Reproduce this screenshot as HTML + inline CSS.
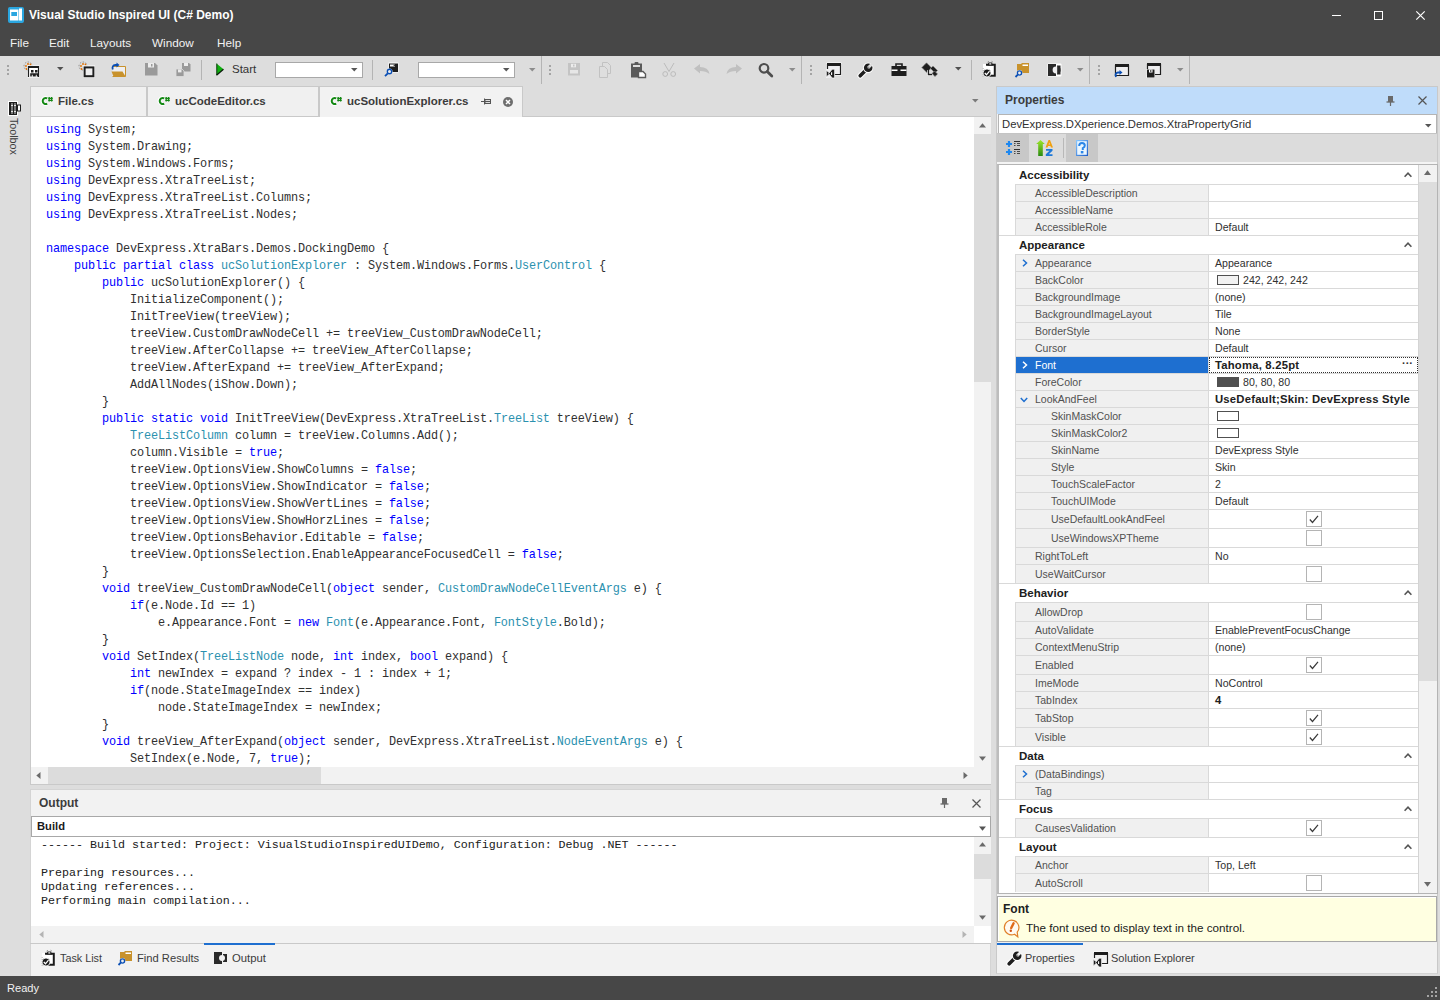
<!DOCTYPE html><html><head><meta charset="utf-8"><style>
html,body{margin:0;padding:0;}
body{width:1440px;height:1000px;position:relative;overflow:hidden;background:#dddddd;font-family:"Liberation Sans",sans-serif;font-size:11px;color:#505050;}
div{box-sizing:border-box;}
.t{position:absolute;white-space:pre;line-height:14px;}
.code{position:absolute;left:45px;top:120px;font-family:"Liberation Mono",monospace;font-size:11.85px;letter-spacing:-0.11px;line-height:17px;color:#303030;white-space:pre;}
.k{color:#0000ff;}
.ty{color:#2b91af;}
svg{position:absolute;overflow:visible;}
</style></head><body>
<div style="position:absolute;left:0px;top:0px;width:1440px;height:56px;background:#474747;"></div>
<svg style="left:8px;top:7px" width="16" height="16"><rect x="0" y="0" width="16" height="16" rx="2" fill="#2aa6e0"/><rect x="2" y="2.5" width="8.5" height="11" fill="#fff"/><rect x="3.3" y="5" width="5.7" height="4" fill="#2aa6e0"/><rect x="11" y="1.5" width="3" height="12" fill="#fff"/></svg>
<div class="t" style="left:29px;top:8px;color:#fff;font-weight:bold;font-size:12px;line-height:15px;">Visual Studio Inspired UI (C# Demo)</div>
<div style="position:absolute;left:1332px;top:15px;width:9px;height:1px;background:#fff;"></div>
<div style="position:absolute;left:1374px;top:11px;width:9px;height:9px;border:1px solid #fff;"></div>
<svg style="left:1416px;top:11px" width="9" height="9"><path d="M0.3 0.3L8.7 8.7M8.7 0.3L0.3 8.7" stroke="#fff" stroke-width="1.2"/></svg>
<div class="t" style="left:10px;top:35px;color:#f2f2f2;font-size:11.75px;line-height:15px;">File</div>
<div class="t" style="left:49px;top:35px;color:#f2f2f2;font-size:11.75px;line-height:15px;">Edit</div>
<div class="t" style="left:90px;top:35px;color:#f2f2f2;font-size:11.75px;line-height:15px;">Layouts</div>
<div class="t" style="left:152px;top:35px;color:#f2f2f2;font-size:11.75px;line-height:15px;">Window</div>
<div class="t" style="left:217px;top:35px;color:#f2f2f2;font-size:11.75px;line-height:15px;">Help</div>
<div style="position:absolute;left:0px;top:56px;width:1440px;height:30px;background:#dddddd;"></div>
<div style="position:absolute;left:7px;top:65px;width:2px;height:2px;background:#a4a4a4;"></div>
<div style="position:absolute;left:7px;top:69px;width:2px;height:2px;background:#a4a4a4;"></div>
<div style="position:absolute;left:7px;top:73px;width:2px;height:2px;background:#a4a4a4;"></div>
<svg style="left:23px;top:61px" width="18" height="17"><circle cx="5" cy="5" r="4" fill="none" stroke="#7a7a7a" stroke-width="0.8" stroke-dasharray="1.5 1.5"/><circle cx="3" cy="5" r="0.9" fill="#e07000"/><circle cx="5" cy="3" r="0.9" fill="#e07000"/><circle cx="7.5" cy="3.5" r="0.9" fill="#e07000"/><circle cx="3.5" cy="8" r="0.9" fill="#e07000"/><rect x="4.5" y="4.5" width="12" height="12" fill="#fff"/><path d="M5.5 16V5.5H15.5V16" fill="none" stroke="#1e1e1e" stroke-width="1.2"/><rect x="5" y="5" width="11" height="2" fill="#1e1e1e"/><rect x="8" y="9" width="2.5" height="2.5" fill="#1e1e1e"/><rect x="12" y="9" width="2.5" height="2.5" fill="#1e1e1e"/><path d="M8 15.5V13H10.5V15.5M12 15.5V13H14.5V15.5" stroke="#1e1e1e" stroke-width="1.6" fill="none"/></svg>
<svg style="left:57px;top:67px" width="7" height="4"><path d="M0 0H6.5L3.25 3.5Z" fill="#505050"/></svg>
<svg style="left:78px;top:61px" width="18" height="17"><circle cx="5" cy="5" r="4" fill="none" stroke="#7a7a7a" stroke-width="0.8" stroke-dasharray="1.5 1.5"/><circle cx="3" cy="5" r="0.9" fill="#e07000"/><circle cx="5" cy="3" r="0.9" fill="#e07000"/><circle cx="7.5" cy="3.5" r="0.9" fill="#e07000"/><circle cx="3.5" cy="8" r="0.9" fill="#e07000"/><rect x="5" y="4.5" width="12" height="12" fill="#fff"/><rect x="6.6" y="6.4" width="8.8" height="8.8" fill="#eeeeef" stroke="#1e1e1e" stroke-width="2"/></svg>
<svg style="left:111px;top:62px" width="16" height="16"><path d="M1.5 4.5H14.5V14.5H1.5" fill="#eeeef0" stroke="#c8922c" stroke-width="1"/><path d="M0.5 9.5H11.5L14.5 14.5H2.5Z" fill="#c8922c"/><path d="M1.8 7.5Q0.5 3.5 4.5 3H6.5" stroke="#0b4fb4" stroke-width="1.8" fill="none"/><path d="M5.5 0.5L8.5 3L5.5 5.5Z" fill="#0b4fb4"/></svg>
<svg style="left:145px;top:63px" width="13" height="13"><path d="M0 0H10L12.5 2.5V12.5H0Z" fill="#9a9a9a"/><rect x="3" y="0" width="6" height="4.5" fill="#ececec"/><rect x="6" y="1" width="1.5" height="2.5" fill="#9a9a9a"/></svg>
<svg style="left:175px;top:62px" width="16" height="16"><path d="M7 1H14L15.5 2.5V9.5H7Z" fill="#9a9a9a"/><rect x="9" y="1" width="4" height="3" fill="#ececec"/><path d="M1 7H7L9 9V14.5H1Z" fill="#9a9a9a" stroke="#dedede" stroke-width="0.8"/><rect x="3" y="7.4" width="3.5" height="3" fill="#ececec"/></svg>
<div style="position:absolute;left:201px;top:60px;width:1px;height:20px;background:#b4b4b4;"></div>
<svg style="left:216px;top:63px" width="8" height="13"><path d="M0.5 0.5L7.5 6.3L0.5 12.2Z" fill="#10b010"/><path d="M0.5 12.2L7.5 6.3" stroke="#0a1a0a" stroke-width="1.2"/><path d="M0.8 0.5V12" stroke="#0a1a0a" stroke-width="0.8"/></svg>
<div class="t" style="left:232px;top:62px;color:#333;font-size:11.5px;line-height:15px;">Start</div>
<div style="position:absolute;left:275px;top:62px;width:88px;height:16px;background:#fff;border:1px solid #a8a8a8;"></div>
<svg style="left:351px;top:68px" width="7" height="4"><path d="M0 0H6.5L3.25 3.5Z" fill="#555"/></svg>
<div style="position:absolute;left:372px;top:60px;width:1px;height:20px;background:#b4b4b4;"></div>
<svg style="left:383px;top:62px" width="16" height="16"><rect x="5.5" y="0.5" width="10" height="10" fill="#fff"/><rect x="6" y="1.5" width="9" height="8.5" fill="#1e1e1e"/><rect x="7" y="2.5" width="5" height="2" fill="#fff"/><circle cx="11.3" cy="3.3" r="0.8" fill="#1e1e1e"/><circle cx="6.5" cy="9.5" r="3" fill="#fff"/><circle cx="6.5" cy="9.5" r="2.2" fill="#eee" stroke="#0b4fb4" stroke-width="1.4"/><path d="M4.8 11.3L2 14.2" stroke="#0b4fb4" stroke-width="1.8"/></svg>
<div style="position:absolute;left:418px;top:62px;width:97px;height:16px;background:#fff;border:1px solid #a8a8a8;"></div>
<svg style="left:503px;top:68px" width="7" height="4"><path d="M0 0H6.5L3.25 3.5Z" fill="#555"/></svg>
<svg style="left:529px;top:68px" width="7" height="4"><path d="M0 0H6.5L3.25 3.5Z" fill="#8c8c8c"/></svg>
<div style="position:absolute;left:541px;top:56px;width:1px;height:28px;background:#b4b4b4;"></div>
<div style="position:absolute;left:549px;top:65px;width:2px;height:2px;background:#a4a4a4;"></div>
<div style="position:absolute;left:549px;top:69px;width:2px;height:2px;background:#a4a4a4;"></div>
<div style="position:absolute;left:549px;top:73px;width:2px;height:2px;background:#a4a4a4;"></div>
<svg style="left:568px;top:63px" width="12" height="13"><path d="M0 0H12V12.5H0Z" fill="#c4c4c4"/><rect x="3" y="0.8" width="5" height="3.5" fill="#ececec"/><rect x="5" y="1.5" width="1.5" height="2" fill="#c4c4c4"/><rect x="2" y="7" width="8" height="3.5" fill="#e6e6e6"/></svg>
<svg style="left:599px;top:62px" width="13" height="16"><path d="M3.5 0.5H8.5L11.5 3.5V11.5H3.5Z" fill="#dedede" stroke="#c2c2c2" stroke-width="1"/><path d="M0.5 4.5H5.5L8.5 7.5V15.5H0.5Z" fill="#dedede" stroke="#c2c2c2" stroke-width="1"/></svg>
<svg style="left:631px;top:62px" width="16" height="16"><path d="M0 1.5H11V15.5H0Z" fill="#5a5a5a"/><rect x="2" y="3" width="7" height="2" fill="#dedede"/><rect x="3.5" y="0" width="4" height="2.5" rx="1" fill="#5a5a5a"/><path d="M7.5 9.5H12L14.5 12V15.5H7.5Z" fill="#fff" stroke="#5a5a5a" stroke-width="1.4"/></svg>
<svg style="left:662px;top:63px" width="15" height="14"><path d="M2 0L7 8.5M12 0L7 8.5" stroke="#bcbcbc" stroke-width="1"/><circle cx="3.2" cy="11" r="2.4" fill="none" stroke="#bcbcbc" stroke-width="1"/><circle cx="11.2" cy="11" r="2.4" fill="none" stroke="#bcbcbc" stroke-width="1"/></svg>
<svg style="left:694px;top:64px" width="16" height="11"><path d="M0 4.5L6 0V3Q14.5 3 15.5 10Q12 7 6 7V9.5Z" fill="#c0c0c0"/></svg>
<svg style="left:726px;top:64px" width="16" height="11"><path d="M16 4.5L10 0V3Q1.5 3 0.5 10Q4 7 10 7V9.5Z" fill="#c0c0c0"/></svg>
<svg style="left:758px;top:62px" width="16" height="16"><circle cx="6" cy="6.3" r="4.3" fill="none" stroke="#4e4e4e" stroke-width="2.2"/><path d="M9.2 9.5L13.8 14" stroke="#4e4e4e" stroke-width="2.8" stroke-linecap="round"/></svg>
<svg style="left:789px;top:68px" width="7" height="4"><path d="M0 0H6.5L3.25 3.5Z" fill="#8c8c8c"/></svg>
<div style="position:absolute;left:801px;top:56px;width:1px;height:28px;background:#b4b4b4;"></div>
<div style="position:absolute;left:810px;top:65px;width:2px;height:2px;background:#a4a4a4;"></div>
<div style="position:absolute;left:810px;top:69px;width:2px;height:2px;background:#a4a4a4;"></div>
<div style="position:absolute;left:810px;top:73px;width:2px;height:2px;background:#a4a4a4;"></div>
<svg style="left:826px;top:62px" width="16" height="16"><rect x="0.5" y="0.5" width="15" height="13" fill="#fff"/><path d="M1.5 2V12.5H14.5V2" fill="#eeeef0" stroke="#1e1e1e" stroke-width="1.2"/><rect x="1" y="1" width="14" height="3" fill="#1e1e1e"/><rect x="0" y="7" width="8.5" height="9" fill="#eeeef0"/><path d="M0.3 8.3L4.2 11.6L0.3 14.9Z" fill="#1e1e1e" stroke="#fff" stroke-width="0.7"/><path d="M8.6 7.2V16H6.2L2.6 11.6L6.2 7.2Z" fill="#1e1e1e" stroke="#fff" stroke-width="0.7"/><path d="M5.6 10.2V13" stroke="#fff" stroke-width="1.1"/></svg>
<svg style="left:858px;top:62px" width="16" height="16"><path d="M2.2 13.8L8.5 7.5" stroke="#fff" stroke-width="5.5" stroke-linecap="round"/><path d="M2.2 13.8L8.5 7.5" stroke="#1e1e1e" stroke-width="3.6" stroke-linecap="round"/><circle cx="10.2" cy="5.8" r="5.2" fill="#fff"/><circle cx="10.2" cy="5.8" r="4.3" fill="#1e1e1e"/><path d="M10.2 5.8L15 1" stroke="#dddddd" stroke-width="2.8"/><circle cx="10.4" cy="5.6" r="1.1" fill="#9a9a9a"/></svg>
<svg style="left:891px;top:63px" width="16" height="13"><rect x="0.5" y="3" width="15" height="10" fill="#1e1e1e"/><path d="M5 3.5V1H11V3.5" stroke="#1e1e1e" stroke-width="1.6" fill="none"/><rect x="0.5" y="6.5" width="15" height="1.5" fill="#fff"/><rect x="6.5" y="5.5" width="3" height="3.5" fill="#1e1e1e"/></svg>
<svg style="left:921px;top:62px" width="18" height="16"><path d="M0.8 5.5L5.5 0.8L10.5 5.8L5.8 10.5Z" fill="#1e1e1e" stroke="#8a8a8a" stroke-width="1" stroke-dasharray="1.2 0.6"/><path d="M9.5 6.5L12 4L16.5 8.5L14 11Z" fill="#1e1e1e" stroke="#8a8a8a" stroke-width="1" stroke-dasharray="1.2 0.6"/><path d="M11 11.5L13.5 9L16.5 12L14 14.5Z" fill="#1e1e1e" stroke="#8a8a8a" stroke-width="1" stroke-dasharray="1.2 0.6"/><path d="M7.5 8V12.5H11" stroke="#fff" stroke-width="2.6" fill="none"/><path d="M7.5 8V12.5H11" stroke="#1e1e1e" stroke-width="1.4" fill="none"/></svg>
<svg style="left:955px;top:67px" width="7" height="4"><path d="M0 0H6.5L3.25 3.5Z" fill="#505050"/></svg>
<div style="position:absolute;left:971px;top:60px;width:1px;height:20px;background:#b4b4b4;"></div>
<svg style="left:982px;top:61px" width="15" height="17"><rect x="1" y="3" width="13" height="13" fill="#fff"/><path d="M4 3.8H12.8V14.8H6" fill="#fff" stroke="#1a1a1a" stroke-width="2"/><path d="M5.5 4.5L6.5 1.5H10L11 4.5Z" fill="#1a1a1a"/><rect x="7.3" y="2.3" width="2" height="1.2" fill="#fff"/><path d="M5.5 1.2L7 0.2M9.5 0.2L11 1.2" stroke="#8a8a8a" stroke-width="0.8"/><circle cx="5" cy="12" r="4" fill="#1a1a1a" stroke="#fff" stroke-width="0.8"/><path d="M2.8 12L4.5 13.8L7.5 10.2" stroke="#fff" stroke-width="1.3" fill="none"/><path d="M1.2 7V16" stroke="#8a8a8a" stroke-width="0.6" stroke-dasharray="1 1"/></svg>
<svg style="left:1015px;top:62px" width="16" height="16"><path d="M2 2H6L7 1H14V11H2Z" fill="#c8922c"/><rect x="7.5" y="2.5" width="5.5" height="1.5" fill="#fff"/><circle cx="4.5" cy="11" r="2.9" fill="#fff"/><circle cx="4.5" cy="11" r="2.1" fill="#eee" stroke="#0b4fb4" stroke-width="1.4"/><path d="M2.8 12.7L0.5 15" stroke="#0b4fb4" stroke-width="1.8"/></svg>
<svg style="left:1047px;top:63px" width="15" height="14"><rect x="0.5" y="0.5" width="14" height="13" fill="#fff" rx="1"/><rect x="1" y="1" width="8" height="12" fill="#2a2a2a"/><path d="M10 2.5H13.5V11.5H10Z" fill="#2a2a2a"/><circle cx="9" cy="7" r="3.4" fill="#eeeef0"/><path d="M9 3.6A3.4 3.4 0 0 1 9 10.4" fill="#2a2a2a" transform="translate(1.2 0)"/></svg>
<svg style="left:1077px;top:68px" width="7" height="4"><path d="M0 0H6.5L3.25 3.5Z" fill="#8c8c8c"/></svg>
<div style="position:absolute;left:1089px;top:56px;width:1px;height:28px;background:#b4b4b4;"></div>
<div style="position:absolute;left:1098px;top:65px;width:2px;height:2px;background:#a4a4a4;"></div>
<div style="position:absolute;left:1098px;top:69px;width:2px;height:2px;background:#a4a4a4;"></div>
<div style="position:absolute;left:1098px;top:73px;width:2px;height:2px;background:#a4a4a4;"></div>
<svg style="left:1114px;top:63px" width="16" height="16"><rect x="1" y="1" width="14" height="12" fill="#fff"/><path d="M1.5 2V12.5H14.5V2" fill="#eeeef0" stroke="#1e1e1e" stroke-width="1.2"/><rect x="1" y="1" width="14" height="3" fill="#1e1e1e"/><path d="M2 14Q0.5 10 4 9.5H6" stroke="#0b4fb4" stroke-width="1.8" fill="none"/><path d="M5.5 7L8.5 9.5L5.5 12Z" fill="#0b4fb4"/></svg>
<svg style="left:1146px;top:62px" width="16" height="16"><rect x="1" y="1" width="14" height="12" fill="#fff"/><path d="M1.5 2V12.5H14.5V2" fill="#eeeef0" stroke="#1e1e1e" stroke-width="1.2"/><rect x="1" y="1" width="14" height="3" fill="#1e1e1e"/><rect x="0.5" y="7" width="8.5" height="9" fill="#fff"/><rect x="1" y="7.5" width="7.5" height="8" fill="#1e1e1e"/><rect x="3" y="7.5" width="3.5" height="3" fill="#fff"/><rect x="4.3" y="8" width="1" height="2" fill="#1e1e1e"/></svg>
<svg style="left:1177px;top:68px" width="7" height="4"><path d="M0 0H6.5L3.25 3.5Z" fill="#8c8c8c"/></svg>
<div style="position:absolute;left:1189px;top:56px;width:1px;height:28px;background:#b4b4b4;"></div>
<div style="position:absolute;left:0px;top:973px;width:1440px;height:3px;background:#dedede;"></div>
<div style="position:absolute;left:0px;top:976px;width:1440px;height:24px;background:#474747;"></div>
<div class="t" style="left:7px;top:981px;color:#f2f2f2;font-size:11.1px;line-height:15px;">Ready</div>
<div style="position:absolute;left:1435px;top:987px;width:2px;height:2px;background:#a4a4a4;"></div>
<div style="position:absolute;left:1431px;top:991px;width:2px;height:2px;background:#a4a4a4;"></div>
<div style="position:absolute;left:1435px;top:991px;width:2px;height:2px;background:#a4a4a4;"></div>
<div style="position:absolute;left:1427px;top:995px;width:2px;height:2px;background:#a4a4a4;"></div>
<div style="position:absolute;left:1431px;top:995px;width:2px;height:2px;background:#a4a4a4;"></div>
<div style="position:absolute;left:1435px;top:995px;width:2px;height:2px;background:#a4a4a4;"></div>
<svg style="left:8px;top:101px" width="14" height="15"><rect x="0.5" y="0.5" width="9" height="14" fill="#1e1e1e" stroke="#fff" stroke-width="1"/><rect x="9.5" y="4" width="3" height="6" fill="#fff" stroke="#1e1e1e" stroke-width="1"/><path d="M4 2V13M7 2V13" stroke="#fff" stroke-width="0.8"/><path d="M3 4.5H5M6 4.5H8M3 10.5H5M6 10.5H8" stroke="#fff" stroke-width="0.8"/></svg>
<div class="t" style="left:8px;top:118px;width:14px;height:40px;"><div style="position:absolute;left:0;top:0;transform-origin:0 0;transform:rotate(90deg) translate(0,-12px);font-size:10.7px;line-height:12px;color:#3c3c3c;">Toolbox</div></div>
<div style="position:absolute;left:30px;top:116px;width:961px;height:1px;background:#c9c9c9;"></div>
<div style="position:absolute;left:30px;top:86px;width:117px;height:31px;background:#f0f0f0;border:1px solid #c9c9c9;"></div>
<svg style="left:41px;top:96px" width="13" height="10"><path d="M6 2.2A3.2 3.2 0 1 0 6 7.8" stroke="#fff" stroke-width="3.5" fill="none"/><path d="M6.2 2.4A3 3 0 1 0 6.2 7.6" stroke="#138813" stroke-width="2" fill="none"/><path d="M8.2 1V5.5M10.6 1V5.5M7.2 2.3H11.8M7.2 4.3H11.8" stroke="#138813" stroke-width="1.3"/></svg>
<div class="t" style="left:58px;top:94px;color:#3c3c3c;font-weight:bold;font-size:11.5px;line-height:15px;">File.cs</div>
<div style="position:absolute;left:147px;top:86px;width:172px;height:31px;background:#f0f0f0;border:1px solid #c9c9c9;"></div>
<svg style="left:158px;top:96px" width="13" height="10"><path d="M6 2.2A3.2 3.2 0 1 0 6 7.8" stroke="#fff" stroke-width="3.5" fill="none"/><path d="M6.2 2.4A3 3 0 1 0 6.2 7.6" stroke="#138813" stroke-width="2" fill="none"/><path d="M8.2 1V5.5M10.6 1V5.5M7.2 2.3H11.8M7.2 4.3H11.8" stroke="#138813" stroke-width="1.3"/></svg>
<div class="t" style="left:175px;top:94px;color:#3c3c3c;font-weight:bold;font-size:11.5px;line-height:15px;">ucCodeEditor.cs</div>
<div style="position:absolute;left:319px;top:86px;width:204px;height:31px;background:#f2f2f2;border:1px solid #c9c9c9;border-bottom:none;"></div>
<svg style="left:330px;top:96px" width="13" height="10"><path d="M6 2.2A3.2 3.2 0 1 0 6 7.8" stroke="#fff" stroke-width="3.5" fill="none"/><path d="M6.2 2.4A3 3 0 1 0 6.2 7.6" stroke="#138813" stroke-width="2" fill="none"/><path d="M8.2 1V5.5M10.6 1V5.5M7.2 2.3H11.8M7.2 4.3H11.8" stroke="#138813" stroke-width="1.3"/></svg>
<div class="t" style="left:347px;top:94px;color:#3c3c3c;font-weight:bold;font-size:11.5px;line-height:15px;">ucSolutionExplorer.cs</div>
<svg style="left:481px;top:98px" width="10" height="8"><path d="M0 3.5H3.5M3.5 0.5V6.5" stroke="#555" stroke-width="1" fill="none"/><rect x="4" y="1.5" width="5.5" height="4" fill="#eee" stroke="#555" stroke-width="1"/><path d="M4 3.5H9.5" stroke="#555" stroke-width="1.2"/></svg>
<svg style="left:503px;top:97px" width="11" height="11"><circle cx="5" cy="5" r="5" fill="#6e6e6e"/><path d="M3 3L7 7M7 3L3 7" stroke="#fff" stroke-width="1.5"/></svg>
<svg style="left:972px;top:99px" width="7" height="4"><path d="M0 0H6.5L3.25 3.5Z" fill="#7a7a7a"/></svg>
<div style="position:absolute;left:30px;top:117px;width:961px;height:668px;background:#fff;border-right:1px solid #c9c9c9;border-left:1px solid #c9c9c9;"></div>
<div style="position:absolute;left:31px;top:117px;width:943px;height:650px;overflow:hidden;">
<div class="code" style="left:15px;top:5px;"><span class="k">using</span> System;
<span class="k">using</span> System.Drawing;
<span class="k">using</span> System.Windows.Forms;
<span class="k">using</span> DevExpress.XtraTreeList;
<span class="k">using</span> DevExpress.XtraTreeList.Columns;
<span class="k">using</span> DevExpress.XtraTreeList.Nodes;

<span class="k">namespace</span> DevExpress.XtraBars.Demos.DockingDemo {
    <span class="k">public</span> <span class="k">partial</span> <span class="k">class</span> <span class="ty">ucSolutionExplorer</span> : System.Windows.Forms.<span class="ty">UserControl</span> {
        <span class="k">public</span> ucSolutionExplorer() {
            InitializeComponent();
            InitTreeView(treeView);
            treeView.CustomDrawNodeCell += treeView_CustomDrawNodeCell;
            treeView.AfterCollapse += treeView_AfterCollapse;
            treeView.AfterExpand += treeView_AfterExpand;
            AddAllNodes(iShow.Down);
        }
        <span class="k">public</span> <span class="k">static</span> <span class="k">void</span> InitTreeView(DevExpress.XtraTreeList.<span class="ty">TreeList</span> treeView) {
            <span class="ty">TreeListColumn</span> column = treeView.Columns.Add();
            column.Visible = <span class="k">true</span>;
            treeView.OptionsView.ShowColumns = <span class="k">false</span>;
            treeView.OptionsView.ShowIndicator = <span class="k">false</span>;
            treeView.OptionsView.ShowVertLines = <span class="k">false</span>;
            treeView.OptionsView.ShowHorzLines = <span class="k">false</span>;
            treeView.OptionsBehavior.Editable = <span class="k">false</span>;
            treeView.OptionsSelection.EnableAppearanceFocusedCell = <span class="k">false</span>;
        }
        <span class="k">void</span> treeView_CustomDrawNodeCell(<span class="k">object</span> sender, <span class="ty">CustomDrawNodeCellEventArgs</span> e) {
            <span class="k">if</span>(e.Node.Id == 1)
                e.Appearance.Font = <span class="k">new</span> <span class="ty">Font</span>(e.Appearance.Font, <span class="ty">FontStyle</span>.Bold);
        }
        <span class="k">void</span> SetIndex(<span class="ty">TreeListNode</span> node, <span class="k">int</span> index, <span class="k">bool</span> expand) {
            <span class="k">int</span> newIndex = expand ? index - 1 : index + 1;
            <span class="k">if</span>(node.StateImageIndex == index)
                node.StateImageIndex = newIndex;
        }
        <span class="k">void</span> treeView_AfterExpand(<span class="k">object</span> sender, DevExpress.XtraTreeList.<span class="ty">NodeEventArgs</span> e) {
            SetIndex(e.Node, 7, <span class="k">true</span>);</div>
</div>
<div style="position:absolute;left:974px;top:117px;width:17px;height:650px;background:#f2f2f2;"></div>
<div style="position:absolute;left:974px;top:134px;width:17px;height:248px;background:#dcdcdc;"></div>
<svg style="left:979px;top:123px" width="7" height="5"><path d="M0 4.5L3.5 0.3L7 4.5Z" fill="#6a6a6a"/></svg>
<svg style="left:979px;top:756px" width="7" height="5"><path d="M0 0.5L3.5 4.7L7 0.5Z" fill="#6a6a6a"/></svg>
<div style="position:absolute;left:31px;top:767px;width:943px;height:17px;background:#f2f2f2;"></div>
<div style="position:absolute;left:48px;top:767px;width:273px;height:17px;background:#dcdcdc;"></div>
<svg style="left:36px;top:772px" width="5" height="7"><path d="M4.5 0L0.3 3.5L4.5 7Z" fill="#6a6a6a"/></svg>
<svg style="left:963px;top:772px" width="5" height="7"><path d="M0.5 0L4.7 3.5L0.5 7Z" fill="#6a6a6a"/></svg>
<div style="position:absolute;left:974px;top:767px;width:17px;height:17px;background:#f2f2f2;"></div>
<div style="position:absolute;left:30px;top:784px;width:961px;height:1px;background:#c9c9c9;"></div>
<div style="position:absolute;left:30px;top:789px;width:961px;height:187px;background:#f2f2f2;border:1px solid #d4d4d4;border-bottom:none;"></div>
<div class="t" style="left:39px;top:796px;color:#3c3c3c;font-weight:bold;font-size:12px;line-height:14px;">Output</div>
<svg style="left:940px;top:798px" width="9" height="10"><rect x="2.5" y="0.5" width="4" height="5" fill="#6a6a6a" stroke="#6a6a6a" stroke-width="1"/><path d="M0.5 6H8.5" stroke="#6a6a6a" stroke-width="1.3"/><path d="M4.5 6V10" stroke="#6a6a6a" stroke-width="1.2"/></svg>
<svg style="left:972px;top:799px" width="9" height="9"><path d="M0.5 0.5L8.5 8.5M8.5 0.5L0.5 8.5" stroke="#555" stroke-width="1.2"/></svg>
<div style="position:absolute;left:31px;top:816px;width:960px;height:21px;background:#fff;border:1px solid #a8a8a8;"></div>
<div class="t" style="left:37px;top:819px;color:#1a1a1a;font-weight:bold;font-size:11.2px;line-height:14px;">Build</div>
<svg style="left:979px;top:826px" width="7" height="5"><path d="M0 0.5L3.5 4.7L7 0.5Z" fill="#555"/></svg>
<div style="position:absolute;left:31px;top:837px;width:943px;height:89px;background:#fff;"></div>
<div style="position:absolute;left:41px;top:838px;font-family:'Liberation Mono',monospace;font-size:11.666px;line-height:14px;color:#202020;white-space:pre;">------ Build started: Project: VisualStudioInspiredUIDemo, Configuration: Debug .NET ------

Preparing resources...
Updating references...
Performing main compilation...</div>
<div style="position:absolute;left:974px;top:837px;width:17px;height:89px;background:#f2f2f2;"></div>
<div style="position:absolute;left:974px;top:854px;width:17px;height:25px;background:#dcdcdc;"></div>
<svg style="left:979px;top:842px" width="7" height="5"><path d="M0 4.5L3.5 0.3L7 4.5Z" fill="#6a6a6a"/></svg>
<svg style="left:979px;top:915px" width="7" height="5"><path d="M0 0.5L3.5 4.7L7 0.5Z" fill="#6a6a6a"/></svg>
<div style="position:absolute;left:34px;top:926px;width:940px;height:17px;background:#f2f2f2;"></div>
<svg style="left:39px;top:931px" width="5" height="7"><path d="M4.5 0L0.3 3.5L4.5 7Z" fill="#b4b4b4"/></svg>
<svg style="left:962px;top:931px" width="5" height="7"><path d="M0.5 0L4.7 3.5L0.5 7Z" fill="#b4b4b4"/></svg>
<div style="position:absolute;left:974px;top:926px;width:17px;height:17px;background:#fff;"></div>
<div style="position:absolute;left:30px;top:943px;width:961px;height:1px;background:#c9c9c9;"></div>
<div style="position:absolute;left:30px;top:944px;width:961px;height:29px;background:#f2f2f2;border-left:1px solid #d4d4d4;border-right:1px solid #d4d4d4;"></div>
<div style="position:absolute;left:204px;top:943px;width:71px;height:2px;background:#1e6fd0;"></div>
<svg style="left:41px;top:950px" width="15" height="17"><rect x="1" y="3" width="13" height="13" fill="#fff"/><path d="M4 3.8H12.8V14.8H6" fill="#fff" stroke="#1a1a1a" stroke-width="2"/><path d="M5.5 4.5L6.5 1.5H10L11 4.5Z" fill="#1a1a1a"/><rect x="7.3" y="2.3" width="2" height="1.2" fill="#fff"/><path d="M5.5 1.2L7 0.2M9.5 0.2L11 1.2" stroke="#8a8a8a" stroke-width="0.8"/><circle cx="5" cy="12" r="4" fill="#1a1a1a" stroke="#fff" stroke-width="0.8"/><path d="M2.8 12L4.5 13.8L7.5 10.2" stroke="#fff" stroke-width="1.3" fill="none"/><path d="M1.2 7V16" stroke="#8a8a8a" stroke-width="0.6" stroke-dasharray="1 1"/></svg>
<div class="t" style="left:60px;top:951px;color:#3c3c3c;font-size:10.8px;line-height:15px;">Task List</div>
<svg style="left:118px;top:950px" width="15" height="16"><path d="M2 2H6L7 1H14V11H2Z" fill="#c8922c"/><rect x="7.5" y="2.5" width="5.5" height="1.5" fill="#fff"/><circle cx="4.5" cy="11" r="2.9" fill="#fff"/><circle cx="4.5" cy="11" r="2.1" fill="#eee" stroke="#0b4fb4" stroke-width="1.4"/><path d="M2.8 12.7L0.5 15" stroke="#0b4fb4" stroke-width="1.8"/></svg>
<div class="t" style="left:137px;top:951px;color:#3c3c3c;font-size:11.2px;line-height:15px;">Find Results</div>
<svg style="left:214px;top:952px" width="14" height="12"><rect x="0" y="0" width="8" height="12" fill="#2a2a2a"/><path d="M9 2H13V10H9Z" fill="#2a2a2a"/><circle cx="8" cy="6" r="3" fill="#f2f2f2"/></svg>
<div class="t" style="left:232px;top:951px;color:#3c3c3c;font-size:11.3px;line-height:15px;">Output</div>
<div style="position:absolute;left:996px;top:86px;width:442px;height:888px;background:#f2f2f2;border:1px solid #c9c9c9;border-bottom:1px solid #d4d4d4;"></div>
<div style="position:absolute;left:997px;top:87px;width:440px;height:27px;background:#bfdcfa;"></div>
<div class="t" style="left:1005px;top:93px;color:#3c3c3c;font-weight:bold;font-size:12px;line-height:14px;">Properties</div>
<svg style="left:1386px;top:96px" width="9" height="10"><rect x="2.5" y="0.5" width="4" height="5" fill="#6a6a6a" stroke="#6a6a6a" stroke-width="1"/><path d="M0.5 6H8.5" stroke="#6a6a6a" stroke-width="1.3"/><path d="M4.5 6V10" stroke="#6a6a6a" stroke-width="1.2"/></svg>
<svg style="left:1418px;top:96px" width="9" height="9"><path d="M0.5 0.5L8.5 8.5M8.5 0.5L0.5 8.5" stroke="#555" stroke-width="1.2"/></svg>
<div style="position:absolute;left:998px;top:114px;width:439px;height:20px;background:#fff;border:1px solid #b4b4b4;"></div>
<div class="t" style="left:1002px;top:117px;color:#303030;font-size:11.27px;line-height:14px;">DevExpress.DXperience.Demos.XtraPropertyGrid</div>
<svg style="left:1425px;top:124px" width="7" height="4"><path d="M0 0H6.5L3.25 3.5Z" fill="#555"/></svg>
<div style="position:absolute;left:997px;top:133px;width:440px;height:1px;background:#c4c4c4;"></div>
<div style="position:absolute;left:997px;top:134px;width:440px;height:28px;background:#dcdcdc;"></div>
<div style="position:absolute;left:997px;top:134px;width:32px;height:28px;background:#c8c8c8;"></div>
<div style="position:absolute;left:1066px;top:134px;width:32px;height:28px;background:#c8c8c8;"></div>
<div style="position:absolute;left:1063px;top:138px;width:1px;height:20px;background:#b8b8b8;"></div>
<svg style="left:1003px;top:139px" width="20" height="18"><path d="M6 2V8M3 5H9M6 10V16M3 13H9" stroke="#1e88f0" stroke-width="2.2"/><path d="M11 2.5H17M11 4.5H12.5M14 4.5H17M11 6.5H12.5M14 6.5H17M11 10.5H17M11 12.5H12.5M14 12.5H17M11 14.5H12.5M14 14.5H17" stroke="#4a4a4a" stroke-width="1"/><path d="M11 2.5H17M11 10.5H17" stroke="#303030" stroke-width="1.2"/></svg>
<svg style="left:1036px;top:139px" width="19" height="18"><defs><linearGradient id="ga" x1="0" y1="0" x2="0" y2="1"><stop offset="0" stop-color="#9ee82a"/><stop offset="1" stop-color="#2a8a10"/></linearGradient></defs><path d="M4.5 1L8.8 5H6.8V17H2.2V5H0.2Z" fill="url(#ga)"/><path d="M9.5 8.5L12.5 1H14L17 8.5H15L14.4 7H12.1L11.5 8.5ZM12.6 5.5H13.9L13.25 3.5Z" fill="#f0a010"/><path d="M10 10H16.5V11.7L12.8 15.3H16.5V17H9.8V15.3L13.5 11.7H10Z" fill="#1e78d8"/></svg>
<svg style="left:1076px;top:140px" width="12" height="16"><defs><linearGradient id="gh" x1="0" y1="0" x2="1" y2="1"><stop offset="0" stop-color="#8ccaff"/><stop offset="1" stop-color="#1a5cc8"/></linearGradient></defs><rect x="0" y="0" width="12" height="16" fill="url(#gh)"/><rect x="1.2" y="1.2" width="9.6" height="13.6" fill="#eaf6ff"/><path d="M3.2 6Q3.2 3 6 3Q8.8 3 8.8 5.6Q8.8 7.2 6.8 8.2V10" stroke="#2a86e8" stroke-width="2" fill="none"/><rect x="4.8" y="11" width="2.6" height="2.4" fill="#2a86e8"/></svg>
<div style="position:absolute;left:997px;top:162px;width:440px;height:2px;background:#f4f4f4;"></div>
<div style="position:absolute;left:997px;top:164px;width:441px;height:730px;background:#fff;border:1px solid #b4b4b4;border-left:2px solid #bdbdbd;"></div>
<div style="position:absolute;left:1418px;top:165px;width:19px;height:728px;background:#f2f2f2;border-left:1px solid #d4d4d4;"></div>
<div style="position:absolute;left:1419px;top:182px;width:18px;height:499px;background:#dddddd;"></div>
<svg style="left:1424px;top:170px" width="7" height="5"><path d="M0 5L3.5 0.3L7 5Z" fill="#6a6a6a"/></svg>
<svg style="left:1424px;top:882px" width="7" height="5"><path d="M0 0L3.5 4.7L7 0Z" fill="#6a6a6a"/></svg>
<div class="t" style="left:1019px;top:168px;color:#202020;font-weight:bold;font-size:11.5px;line-height:15px;">Accessibility</div>
<svg style="left:1404px;top:172px" width="8" height="6"><path d="M0.6 4.8L4 1.2L7.4 4.8" stroke="#555" stroke-width="1.6" fill="none"/></svg>
<div style="position:absolute;left:1015px;top:184px;width:193px;height:17px;background:#f0f0f0;"></div>
<div style="position:absolute;left:1015px;top:184px;width:403px;height:1px;background:#d9d9d9;"></div>
<div style="position:absolute;left:1015px;top:184px;width:1px;height:17px;background:#d9d9d9;"></div>
<div style="position:absolute;left:1208px;top:184px;width:1px;height:17px;background:#d9d9d9;"></div>
<div class="t" style="left:1035px;top:186px;color:#505050;font-size:10.5px;line-height:14px;">AccessibleDescription</div>
<div style="position:absolute;left:1015px;top:201px;width:193px;height:17px;background:#f0f0f0;"></div>
<div style="position:absolute;left:1015px;top:201px;width:403px;height:1px;background:#d9d9d9;"></div>
<div style="position:absolute;left:1015px;top:201px;width:1px;height:17px;background:#d9d9d9;"></div>
<div style="position:absolute;left:1208px;top:201px;width:1px;height:17px;background:#d9d9d9;"></div>
<div class="t" style="left:1035px;top:203px;color:#505050;font-size:10.5px;line-height:14px;">AccessibleName</div>
<div style="position:absolute;left:1015px;top:218px;width:193px;height:17px;background:#f0f0f0;"></div>
<div style="position:absolute;left:1015px;top:218px;width:403px;height:1px;background:#d9d9d9;"></div>
<div style="position:absolute;left:1015px;top:218px;width:1px;height:17px;background:#d9d9d9;"></div>
<div style="position:absolute;left:1208px;top:218px;width:1px;height:17px;background:#d9d9d9;"></div>
<div class="t" style="left:1035px;top:220px;color:#505050;font-size:10.5px;line-height:14px;">AccessibleRole</div>
<div class="t" style="left:1215px;top:220px;color:#303030;font-size:10.6px;line-height:14px;">Default</div>
<div style="position:absolute;left:999px;top:235px;width:419px;height:1px;background:#d9d9d9;"></div>
<div class="t" style="left:1019px;top:238px;color:#202020;font-weight:bold;font-size:11.5px;line-height:15px;">Appearance</div>
<svg style="left:1404px;top:242px" width="8" height="6"><path d="M0.6 4.8L4 1.2L7.4 4.8" stroke="#555" stroke-width="1.6" fill="none"/></svg>
<div style="position:absolute;left:1015px;top:254px;width:193px;height:17px;background:#f0f0f0;"></div>
<div style="position:absolute;left:1015px;top:254px;width:403px;height:1px;background:#d9d9d9;"></div>
<div style="position:absolute;left:1015px;top:254px;width:1px;height:17px;background:#d9d9d9;"></div>
<div style="position:absolute;left:1208px;top:254px;width:1px;height:17px;background:#d9d9d9;"></div>
<div class="t" style="left:1035px;top:256px;color:#505050;font-size:10.5px;line-height:14px;">Appearance</div>
<svg style="left:1022px;top:259px" width="6" height="8"><path d="M1 0.8L4.5 4L1 7.2" stroke="#1e6fd0" stroke-width="1.5" fill="none"/></svg>
<div class="t" style="left:1215px;top:256px;color:#303030;font-size:10.6px;line-height:14px;">Appearance</div>
<div style="position:absolute;left:1015px;top:271px;width:193px;height:17px;background:#f0f0f0;"></div>
<div style="position:absolute;left:1015px;top:271px;width:403px;height:1px;background:#d9d9d9;"></div>
<div style="position:absolute;left:1015px;top:271px;width:1px;height:17px;background:#d9d9d9;"></div>
<div style="position:absolute;left:1208px;top:271px;width:1px;height:17px;background:#d9d9d9;"></div>
<div class="t" style="left:1035px;top:273px;color:#505050;font-size:10.5px;line-height:14px;">BackColor</div>
<div style="position:absolute;left:1217px;top:275px;width:22px;height:10px;background:#f2f2f2;border:1px solid #505050;"></div>
<div class="t" style="left:1243px;top:273px;color:#303030;font-size:10.6px;line-height:14px;">242, 242, 242</div>
<div style="position:absolute;left:1015px;top:288px;width:193px;height:17px;background:#f0f0f0;"></div>
<div style="position:absolute;left:1015px;top:288px;width:403px;height:1px;background:#d9d9d9;"></div>
<div style="position:absolute;left:1015px;top:288px;width:1px;height:17px;background:#d9d9d9;"></div>
<div style="position:absolute;left:1208px;top:288px;width:1px;height:17px;background:#d9d9d9;"></div>
<div class="t" style="left:1035px;top:290px;color:#505050;font-size:10.5px;line-height:14px;">BackgroundImage</div>
<div class="t" style="left:1215px;top:290px;color:#303030;font-size:10.6px;line-height:14px;">(none)</div>
<div style="position:absolute;left:1015px;top:305px;width:193px;height:17px;background:#f0f0f0;"></div>
<div style="position:absolute;left:1015px;top:305px;width:403px;height:1px;background:#d9d9d9;"></div>
<div style="position:absolute;left:1015px;top:305px;width:1px;height:17px;background:#d9d9d9;"></div>
<div style="position:absolute;left:1208px;top:305px;width:1px;height:17px;background:#d9d9d9;"></div>
<div class="t" style="left:1035px;top:307px;color:#505050;font-size:10.5px;line-height:14px;">BackgroundImageLayout</div>
<div class="t" style="left:1215px;top:307px;color:#303030;font-size:10.6px;line-height:14px;">Tile</div>
<div style="position:absolute;left:1015px;top:322px;width:193px;height:17px;background:#f0f0f0;"></div>
<div style="position:absolute;left:1015px;top:322px;width:403px;height:1px;background:#d9d9d9;"></div>
<div style="position:absolute;left:1015px;top:322px;width:1px;height:17px;background:#d9d9d9;"></div>
<div style="position:absolute;left:1208px;top:322px;width:1px;height:17px;background:#d9d9d9;"></div>
<div class="t" style="left:1035px;top:324px;color:#505050;font-size:10.5px;line-height:14px;">BorderStyle</div>
<div class="t" style="left:1215px;top:324px;color:#303030;font-size:10.6px;line-height:14px;">None</div>
<div style="position:absolute;left:1015px;top:339px;width:193px;height:17px;background:#f0f0f0;"></div>
<div style="position:absolute;left:1015px;top:339px;width:403px;height:1px;background:#d9d9d9;"></div>
<div style="position:absolute;left:1015px;top:339px;width:1px;height:17px;background:#d9d9d9;"></div>
<div style="position:absolute;left:1208px;top:339px;width:1px;height:17px;background:#d9d9d9;"></div>
<div class="t" style="left:1035px;top:341px;color:#505050;font-size:10.5px;line-height:14px;">Cursor</div>
<div class="t" style="left:1215px;top:341px;color:#303030;font-size:10.6px;line-height:14px;">Default</div>
<div style="position:absolute;left:1015px;top:356px;width:193px;height:17px;background:#1e6fd0;"></div>
<div style="position:absolute;left:1015px;top:356px;width:403px;height:1px;background:#d9d9d9;"></div>
<div style="position:absolute;left:1015px;top:356px;width:1px;height:17px;background:#d9d9d9;"></div>
<div style="position:absolute;left:1208px;top:356px;width:1px;height:17px;background:#d9d9d9;"></div>
<div class="t" style="left:1035px;top:358px;color:#fff;font-size:10.5px;line-height:14px;">Font</div>
<svg style="left:1022px;top:361px" width="6" height="8"><path d="M1 0.8L4.5 4L1 7.2" stroke="#fff" stroke-width="1.5" fill="none"/></svg>
<div class="t" style="left:1215px;top:358px;color:#303030;font-size:10.6px;line-height:14px;font-weight:bold;font-size:11.3px;letter-spacing:0.2px;color:#202020;">Tahoma, 8.25pt</div>
<div style="position:absolute;left:1209px;top:357px;width:209px;height:16px;border:1px dotted #303030;"></div>
<div class="t" style="left:1402px;top:356px;color:#303030;font-size:11px;font-weight:bold;">···</div>
<div style="position:absolute;left:1015px;top:373px;width:193px;height:17px;background:#f0f0f0;"></div>
<div style="position:absolute;left:1015px;top:373px;width:403px;height:1px;background:#d9d9d9;"></div>
<div style="position:absolute;left:1015px;top:373px;width:1px;height:17px;background:#d9d9d9;"></div>
<div style="position:absolute;left:1208px;top:373px;width:1px;height:17px;background:#d9d9d9;"></div>
<div class="t" style="left:1035px;top:375px;color:#505050;font-size:10.5px;line-height:14px;">ForeColor</div>
<div style="position:absolute;left:1217px;top:377px;width:22px;height:10px;background:#505050;border:1px solid #505050;"></div>
<div class="t" style="left:1243px;top:375px;color:#303030;font-size:10.6px;line-height:14px;">80, 80, 80</div>
<div style="position:absolute;left:1015px;top:390px;width:193px;height:17px;background:#f0f0f0;"></div>
<div style="position:absolute;left:1015px;top:390px;width:403px;height:1px;background:#d9d9d9;"></div>
<div style="position:absolute;left:1015px;top:390px;width:1px;height:17px;background:#d9d9d9;"></div>
<div style="position:absolute;left:1208px;top:390px;width:1px;height:17px;background:#d9d9d9;"></div>
<div class="t" style="left:1035px;top:392px;color:#505050;font-size:10.5px;line-height:14px;">LookAndFeel</div>
<svg style="left:1020px;top:397px" width="8" height="6"><path d="M0.8 1L4 4.5L7.2 1" stroke="#1e6fd0" stroke-width="1.5" fill="none"/></svg>
<div class="t" style="left:1215px;top:392px;color:#303030;font-size:10.6px;line-height:14px;font-weight:bold;font-size:11.3px;letter-spacing:0.2px;color:#202020;">UseDefault;Skin: DevExpress Style</div>
<div style="position:absolute;left:1015px;top:407px;width:193px;height:17px;background:#f0f0f0;"></div>
<div style="position:absolute;left:1015px;top:407px;width:403px;height:1px;background:#d9d9d9;"></div>
<div style="position:absolute;left:1015px;top:407px;width:1px;height:17px;background:#d9d9d9;"></div>
<div style="position:absolute;left:1208px;top:407px;width:1px;height:17px;background:#d9d9d9;"></div>
<div class="t" style="left:1051px;top:409px;color:#505050;font-size:10.5px;line-height:14px;">SkinMaskColor</div>
<div style="position:absolute;left:1217px;top:411px;width:22px;height:10px;background:#fff;border:1px solid #505050;"></div>
<div style="position:absolute;left:1015px;top:424px;width:193px;height:17px;background:#f0f0f0;"></div>
<div style="position:absolute;left:1015px;top:424px;width:403px;height:1px;background:#d9d9d9;"></div>
<div style="position:absolute;left:1015px;top:424px;width:1px;height:17px;background:#d9d9d9;"></div>
<div style="position:absolute;left:1208px;top:424px;width:1px;height:17px;background:#d9d9d9;"></div>
<div class="t" style="left:1051px;top:426px;color:#505050;font-size:10.5px;line-height:14px;">SkinMaskColor2</div>
<div style="position:absolute;left:1217px;top:428px;width:22px;height:10px;background:#fff;border:1px solid #505050;"></div>
<div style="position:absolute;left:1015px;top:441px;width:193px;height:17px;background:#f0f0f0;"></div>
<div style="position:absolute;left:1015px;top:441px;width:403px;height:1px;background:#d9d9d9;"></div>
<div style="position:absolute;left:1015px;top:441px;width:1px;height:17px;background:#d9d9d9;"></div>
<div style="position:absolute;left:1208px;top:441px;width:1px;height:17px;background:#d9d9d9;"></div>
<div class="t" style="left:1051px;top:443px;color:#505050;font-size:10.5px;line-height:14px;">SkinName</div>
<div class="t" style="left:1215px;top:443px;color:#303030;font-size:10.6px;line-height:14px;">DevExpress Style</div>
<div style="position:absolute;left:1015px;top:458px;width:193px;height:17px;background:#f0f0f0;"></div>
<div style="position:absolute;left:1015px;top:458px;width:403px;height:1px;background:#d9d9d9;"></div>
<div style="position:absolute;left:1015px;top:458px;width:1px;height:17px;background:#d9d9d9;"></div>
<div style="position:absolute;left:1208px;top:458px;width:1px;height:17px;background:#d9d9d9;"></div>
<div class="t" style="left:1051px;top:460px;color:#505050;font-size:10.5px;line-height:14px;">Style</div>
<div class="t" style="left:1215px;top:460px;color:#303030;font-size:10.6px;line-height:14px;">Skin</div>
<div style="position:absolute;left:1015px;top:475px;width:193px;height:17px;background:#f0f0f0;"></div>
<div style="position:absolute;left:1015px;top:475px;width:403px;height:1px;background:#d9d9d9;"></div>
<div style="position:absolute;left:1015px;top:475px;width:1px;height:17px;background:#d9d9d9;"></div>
<div style="position:absolute;left:1208px;top:475px;width:1px;height:17px;background:#d9d9d9;"></div>
<div class="t" style="left:1051px;top:477px;color:#505050;font-size:10.5px;line-height:14px;">TouchScaleFactor</div>
<div class="t" style="left:1215px;top:477px;color:#303030;font-size:10.6px;line-height:14px;">2</div>
<div style="position:absolute;left:1015px;top:492px;width:193px;height:17px;background:#f0f0f0;"></div>
<div style="position:absolute;left:1015px;top:492px;width:403px;height:1px;background:#d9d9d9;"></div>
<div style="position:absolute;left:1015px;top:492px;width:1px;height:17px;background:#d9d9d9;"></div>
<div style="position:absolute;left:1208px;top:492px;width:1px;height:17px;background:#d9d9d9;"></div>
<div class="t" style="left:1051px;top:494px;color:#505050;font-size:10.5px;line-height:14px;">TouchUIMode</div>
<div class="t" style="left:1215px;top:494px;color:#303030;font-size:10.6px;line-height:14px;">Default</div>
<div style="position:absolute;left:1015px;top:509px;width:193px;height:19px;background:#f0f0f0;"></div>
<div style="position:absolute;left:1015px;top:509px;width:403px;height:1px;background:#d9d9d9;"></div>
<div style="position:absolute;left:1015px;top:509px;width:1px;height:19px;background:#d9d9d9;"></div>
<div style="position:absolute;left:1208px;top:509px;width:1px;height:19px;background:#d9d9d9;"></div>
<div class="t" style="left:1051px;top:512px;color:#505050;font-size:10.5px;line-height:14px;">UseDefaultLookAndFeel</div>
<div style="position:absolute;left:1306px;top:511px;width:16px;height:16px;background:#fff;border:1px solid #b4b4b4;"></div>
<svg style="left:1309px;top:515px" width="10" height="9"><path d="M0.8 4.5L3.5 7.5L9 0.8" stroke="#3a3a3a" stroke-width="1.2" fill="none"/></svg>
<div style="position:absolute;left:1015px;top:528px;width:193px;height:19px;background:#f0f0f0;"></div>
<div style="position:absolute;left:1015px;top:528px;width:403px;height:1px;background:#d9d9d9;"></div>
<div style="position:absolute;left:1015px;top:528px;width:1px;height:19px;background:#d9d9d9;"></div>
<div style="position:absolute;left:1208px;top:528px;width:1px;height:19px;background:#d9d9d9;"></div>
<div class="t" style="left:1051px;top:531px;color:#505050;font-size:10.5px;line-height:14px;">UseWindowsXPTheme</div>
<div style="position:absolute;left:1306px;top:530px;width:16px;height:16px;background:#fff;border:1px solid #b4b4b4;"></div>
<div style="position:absolute;left:1015px;top:547px;width:193px;height:17px;background:#f0f0f0;"></div>
<div style="position:absolute;left:1015px;top:547px;width:403px;height:1px;background:#d9d9d9;"></div>
<div style="position:absolute;left:1015px;top:547px;width:1px;height:17px;background:#d9d9d9;"></div>
<div style="position:absolute;left:1208px;top:547px;width:1px;height:17px;background:#d9d9d9;"></div>
<div class="t" style="left:1035px;top:549px;color:#505050;font-size:10.5px;line-height:14px;">RightToLeft</div>
<div class="t" style="left:1215px;top:549px;color:#303030;font-size:10.6px;line-height:14px;">No</div>
<div style="position:absolute;left:1015px;top:564px;width:193px;height:19px;background:#f0f0f0;"></div>
<div style="position:absolute;left:1015px;top:564px;width:403px;height:1px;background:#d9d9d9;"></div>
<div style="position:absolute;left:1015px;top:564px;width:1px;height:19px;background:#d9d9d9;"></div>
<div style="position:absolute;left:1208px;top:564px;width:1px;height:19px;background:#d9d9d9;"></div>
<div class="t" style="left:1035px;top:567px;color:#505050;font-size:10.5px;line-height:14px;">UseWaitCursor</div>
<div style="position:absolute;left:1306px;top:566px;width:16px;height:16px;background:#fff;border:1px solid #b4b4b4;"></div>
<div style="position:absolute;left:999px;top:583px;width:419px;height:1px;background:#d9d9d9;"></div>
<div class="t" style="left:1019px;top:586px;color:#202020;font-weight:bold;font-size:11.5px;line-height:15px;">Behavior</div>
<svg style="left:1404px;top:590px" width="8" height="6"><path d="M0.6 4.8L4 1.2L7.4 4.8" stroke="#555" stroke-width="1.6" fill="none"/></svg>
<div style="position:absolute;left:1015px;top:602px;width:193px;height:19px;background:#f0f0f0;"></div>
<div style="position:absolute;left:1015px;top:602px;width:403px;height:1px;background:#d9d9d9;"></div>
<div style="position:absolute;left:1015px;top:602px;width:1px;height:19px;background:#d9d9d9;"></div>
<div style="position:absolute;left:1208px;top:602px;width:1px;height:19px;background:#d9d9d9;"></div>
<div class="t" style="left:1035px;top:605px;color:#505050;font-size:10.5px;line-height:14px;">AllowDrop</div>
<div style="position:absolute;left:1306px;top:604px;width:16px;height:16px;background:#fff;border:1px solid #b4b4b4;"></div>
<div style="position:absolute;left:1015px;top:621px;width:193px;height:17px;background:#f0f0f0;"></div>
<div style="position:absolute;left:1015px;top:621px;width:403px;height:1px;background:#d9d9d9;"></div>
<div style="position:absolute;left:1015px;top:621px;width:1px;height:17px;background:#d9d9d9;"></div>
<div style="position:absolute;left:1208px;top:621px;width:1px;height:17px;background:#d9d9d9;"></div>
<div class="t" style="left:1035px;top:623px;color:#505050;font-size:10.5px;line-height:14px;">AutoValidate</div>
<div class="t" style="left:1215px;top:623px;color:#303030;font-size:10.6px;line-height:14px;">EnablePreventFocusChange</div>
<div style="position:absolute;left:1015px;top:638px;width:193px;height:17px;background:#f0f0f0;"></div>
<div style="position:absolute;left:1015px;top:638px;width:403px;height:1px;background:#d9d9d9;"></div>
<div style="position:absolute;left:1015px;top:638px;width:1px;height:17px;background:#d9d9d9;"></div>
<div style="position:absolute;left:1208px;top:638px;width:1px;height:17px;background:#d9d9d9;"></div>
<div class="t" style="left:1035px;top:640px;color:#505050;font-size:10.5px;line-height:14px;">ContextMenuStrip</div>
<div class="t" style="left:1215px;top:640px;color:#303030;font-size:10.6px;line-height:14px;">(none)</div>
<div style="position:absolute;left:1015px;top:655px;width:193px;height:19px;background:#f0f0f0;"></div>
<div style="position:absolute;left:1015px;top:655px;width:403px;height:1px;background:#d9d9d9;"></div>
<div style="position:absolute;left:1015px;top:655px;width:1px;height:19px;background:#d9d9d9;"></div>
<div style="position:absolute;left:1208px;top:655px;width:1px;height:19px;background:#d9d9d9;"></div>
<div class="t" style="left:1035px;top:658px;color:#505050;font-size:10.5px;line-height:14px;">Enabled</div>
<div style="position:absolute;left:1306px;top:657px;width:16px;height:16px;background:#fff;border:1px solid #b4b4b4;"></div>
<svg style="left:1309px;top:661px" width="10" height="9"><path d="M0.8 4.5L3.5 7.5L9 0.8" stroke="#3a3a3a" stroke-width="1.2" fill="none"/></svg>
<div style="position:absolute;left:1015px;top:674px;width:193px;height:17px;background:#f0f0f0;"></div>
<div style="position:absolute;left:1015px;top:674px;width:403px;height:1px;background:#d9d9d9;"></div>
<div style="position:absolute;left:1015px;top:674px;width:1px;height:17px;background:#d9d9d9;"></div>
<div style="position:absolute;left:1208px;top:674px;width:1px;height:17px;background:#d9d9d9;"></div>
<div class="t" style="left:1035px;top:676px;color:#505050;font-size:10.5px;line-height:14px;">ImeMode</div>
<div class="t" style="left:1215px;top:676px;color:#303030;font-size:10.6px;line-height:14px;">NoControl</div>
<div style="position:absolute;left:1015px;top:691px;width:193px;height:17px;background:#f0f0f0;"></div>
<div style="position:absolute;left:1015px;top:691px;width:403px;height:1px;background:#d9d9d9;"></div>
<div style="position:absolute;left:1015px;top:691px;width:1px;height:17px;background:#d9d9d9;"></div>
<div style="position:absolute;left:1208px;top:691px;width:1px;height:17px;background:#d9d9d9;"></div>
<div class="t" style="left:1035px;top:693px;color:#505050;font-size:10.5px;line-height:14px;">TabIndex</div>
<div class="t" style="left:1215px;top:693px;color:#303030;font-size:10.6px;line-height:14px;font-weight:bold;font-size:11.3px;letter-spacing:0.2px;color:#202020;">4</div>
<div style="position:absolute;left:1015px;top:708px;width:193px;height:19px;background:#f0f0f0;"></div>
<div style="position:absolute;left:1015px;top:708px;width:403px;height:1px;background:#d9d9d9;"></div>
<div style="position:absolute;left:1015px;top:708px;width:1px;height:19px;background:#d9d9d9;"></div>
<div style="position:absolute;left:1208px;top:708px;width:1px;height:19px;background:#d9d9d9;"></div>
<div class="t" style="left:1035px;top:711px;color:#505050;font-size:10.5px;line-height:14px;">TabStop</div>
<div style="position:absolute;left:1306px;top:710px;width:16px;height:16px;background:#fff;border:1px solid #b4b4b4;"></div>
<svg style="left:1309px;top:714px" width="10" height="9"><path d="M0.8 4.5L3.5 7.5L9 0.8" stroke="#3a3a3a" stroke-width="1.2" fill="none"/></svg>
<div style="position:absolute;left:1015px;top:727px;width:193px;height:19px;background:#f0f0f0;"></div>
<div style="position:absolute;left:1015px;top:727px;width:403px;height:1px;background:#d9d9d9;"></div>
<div style="position:absolute;left:1015px;top:727px;width:1px;height:19px;background:#d9d9d9;"></div>
<div style="position:absolute;left:1208px;top:727px;width:1px;height:19px;background:#d9d9d9;"></div>
<div class="t" style="left:1035px;top:730px;color:#505050;font-size:10.5px;line-height:14px;">Visible</div>
<div style="position:absolute;left:1306px;top:729px;width:16px;height:16px;background:#fff;border:1px solid #b4b4b4;"></div>
<svg style="left:1309px;top:733px" width="10" height="9"><path d="M0.8 4.5L3.5 7.5L9 0.8" stroke="#3a3a3a" stroke-width="1.2" fill="none"/></svg>
<div style="position:absolute;left:999px;top:746px;width:419px;height:1px;background:#d9d9d9;"></div>
<div class="t" style="left:1019px;top:749px;color:#202020;font-weight:bold;font-size:11.5px;line-height:15px;">Data</div>
<svg style="left:1404px;top:753px" width="8" height="6"><path d="M0.6 4.8L4 1.2L7.4 4.8" stroke="#555" stroke-width="1.6" fill="none"/></svg>
<div style="position:absolute;left:1015px;top:765px;width:193px;height:17px;background:#f0f0f0;"></div>
<div style="position:absolute;left:1015px;top:765px;width:403px;height:1px;background:#d9d9d9;"></div>
<div style="position:absolute;left:1015px;top:765px;width:1px;height:17px;background:#d9d9d9;"></div>
<div style="position:absolute;left:1208px;top:765px;width:1px;height:17px;background:#d9d9d9;"></div>
<div class="t" style="left:1035px;top:767px;color:#505050;font-size:10.5px;line-height:14px;">(DataBindings)</div>
<svg style="left:1022px;top:770px" width="6" height="8"><path d="M1 0.8L4.5 4L1 7.2" stroke="#1e6fd0" stroke-width="1.5" fill="none"/></svg>
<div style="position:absolute;left:1015px;top:782px;width:193px;height:17px;background:#f0f0f0;"></div>
<div style="position:absolute;left:1015px;top:782px;width:403px;height:1px;background:#d9d9d9;"></div>
<div style="position:absolute;left:1015px;top:782px;width:1px;height:17px;background:#d9d9d9;"></div>
<div style="position:absolute;left:1208px;top:782px;width:1px;height:17px;background:#d9d9d9;"></div>
<div class="t" style="left:1035px;top:784px;color:#505050;font-size:10.5px;line-height:14px;">Tag</div>
<div style="position:absolute;left:999px;top:799px;width:419px;height:1px;background:#d9d9d9;"></div>
<div class="t" style="left:1019px;top:802px;color:#202020;font-weight:bold;font-size:11.5px;line-height:15px;">Focus</div>
<svg style="left:1404px;top:806px" width="8" height="6"><path d="M0.6 4.8L4 1.2L7.4 4.8" stroke="#555" stroke-width="1.6" fill="none"/></svg>
<div style="position:absolute;left:1015px;top:818px;width:193px;height:19px;background:#f0f0f0;"></div>
<div style="position:absolute;left:1015px;top:818px;width:403px;height:1px;background:#d9d9d9;"></div>
<div style="position:absolute;left:1015px;top:818px;width:1px;height:19px;background:#d9d9d9;"></div>
<div style="position:absolute;left:1208px;top:818px;width:1px;height:19px;background:#d9d9d9;"></div>
<div class="t" style="left:1035px;top:821px;color:#505050;font-size:10.5px;line-height:14px;">CausesValidation</div>
<div style="position:absolute;left:1306px;top:820px;width:16px;height:16px;background:#fff;border:1px solid #b4b4b4;"></div>
<svg style="left:1309px;top:824px" width="10" height="9"><path d="M0.8 4.5L3.5 7.5L9 0.8" stroke="#3a3a3a" stroke-width="1.2" fill="none"/></svg>
<div style="position:absolute;left:999px;top:837px;width:419px;height:1px;background:#d9d9d9;"></div>
<div class="t" style="left:1019px;top:840px;color:#202020;font-weight:bold;font-size:11.5px;line-height:15px;">Layout</div>
<svg style="left:1404px;top:844px" width="8" height="6"><path d="M0.6 4.8L4 1.2L7.4 4.8" stroke="#555" stroke-width="1.6" fill="none"/></svg>
<div style="position:absolute;left:1015px;top:856px;width:193px;height:17px;background:#f0f0f0;"></div>
<div style="position:absolute;left:1015px;top:856px;width:403px;height:1px;background:#d9d9d9;"></div>
<div style="position:absolute;left:1015px;top:856px;width:1px;height:17px;background:#d9d9d9;"></div>
<div style="position:absolute;left:1208px;top:856px;width:1px;height:17px;background:#d9d9d9;"></div>
<div class="t" style="left:1035px;top:858px;color:#505050;font-size:10.5px;line-height:14px;">Anchor</div>
<div class="t" style="left:1215px;top:858px;color:#303030;font-size:10.6px;line-height:14px;">Top, Left</div>
<div style="position:absolute;left:1015px;top:873px;width:193px;height:19px;background:#f0f0f0;"></div>
<div style="position:absolute;left:1015px;top:873px;width:403px;height:1px;background:#d9d9d9;"></div>
<div style="position:absolute;left:1015px;top:873px;width:1px;height:19px;background:#d9d9d9;"></div>
<div style="position:absolute;left:1208px;top:873px;width:1px;height:19px;background:#d9d9d9;"></div>
<div class="t" style="left:1035px;top:876px;color:#505050;font-size:10.5px;line-height:14px;">AutoScroll</div>
<div style="position:absolute;left:1306px;top:875px;width:16px;height:16px;background:#fff;border:1px solid #b4b4b4;"></div>
<div style="position:absolute;left:997px;top:894px;width:440px;height:2px;background:#f4f4f4;"></div>
<div style="position:absolute;left:997px;top:896px;width:440px;height:46px;background:#ffffe1;border:1px solid #a8a8a8;box-shadow:inset 1px 1px 0 #fff;"></div>
<div class="t" style="left:1003px;top:902px;color:#202020;font-weight:bold;font-size:12px;line-height:14px;">Font</div>
<svg style="left:1004px;top:919px" width="17" height="19"><path d="M10.5 15.2A7.3 7.3 0 1 1 13.2 13.2L13.8 17.8Z" fill="#fffaf2" stroke="#e0802a" stroke-width="1.2"/><path d="M9.6 4.2L7.2 9" stroke="#e06a1a" stroke-width="2.4" stroke-linecap="round"/><circle cx="6.8" cy="11.8" r="1.2" fill="#d05010"/></svg>
<div class="t" style="left:1026px;top:921px;color:#202020;font-size:11.66px;line-height:14px;">The font used to display text in the control.</div>
<div style="position:absolute;left:997px;top:942px;width:440px;height:1px;background:#f0f0f0;"></div>
<div style="position:absolute;left:997px;top:943px;width:86px;height:2px;background:#1e6fd0;"></div>
<svg style="left:1007px;top:950px" width="16" height="16"><path d="M2.2 13.8L8.5 7.5" stroke="#fff" stroke-width="5.5" stroke-linecap="round"/><path d="M2.2 13.8L8.5 7.5" stroke="#1e1e1e" stroke-width="3.6" stroke-linecap="round"/><circle cx="10.2" cy="5.8" r="5.2" fill="#fff"/><circle cx="10.2" cy="5.8" r="4.3" fill="#1e1e1e"/><path d="M10.2 5.8L15 1" stroke="#f2f2f2" stroke-width="2.8"/><circle cx="10.4" cy="5.6" r="1.1" fill="#9a9a9a"/></svg>
<div class="t" style="left:1025px;top:951px;color:#3c3c3c;font-size:10.9px;line-height:15px;">Properties</div>
<svg style="left:1093px;top:951px" width="16" height="16"><rect x="0.5" y="0.5" width="15" height="13" fill="#fff"/><path d="M1.5 2V12.5H14.5V2" fill="#f2f2f2" stroke="#1e1e1e" stroke-width="1.2"/><rect x="1" y="1" width="14" height="3" fill="#1e1e1e"/><rect x="0" y="7" width="8.5" height="9" fill="#f2f2f2"/><path d="M0.3 8.3L4.2 11.6L0.3 14.9Z" fill="#1e1e1e" stroke="#fff" stroke-width="0.7"/><path d="M8.6 7.2V16H6.2L2.6 11.6L6.2 7.2Z" fill="#1e1e1e" stroke="#fff" stroke-width="0.7"/><path d="M5.6 10.2V13" stroke="#fff" stroke-width="1.1"/></svg>
<div class="t" style="left:1111px;top:951px;color:#3c3c3c;font-size:11px;line-height:15px;">Solution Explorer</div>
</body></html>
